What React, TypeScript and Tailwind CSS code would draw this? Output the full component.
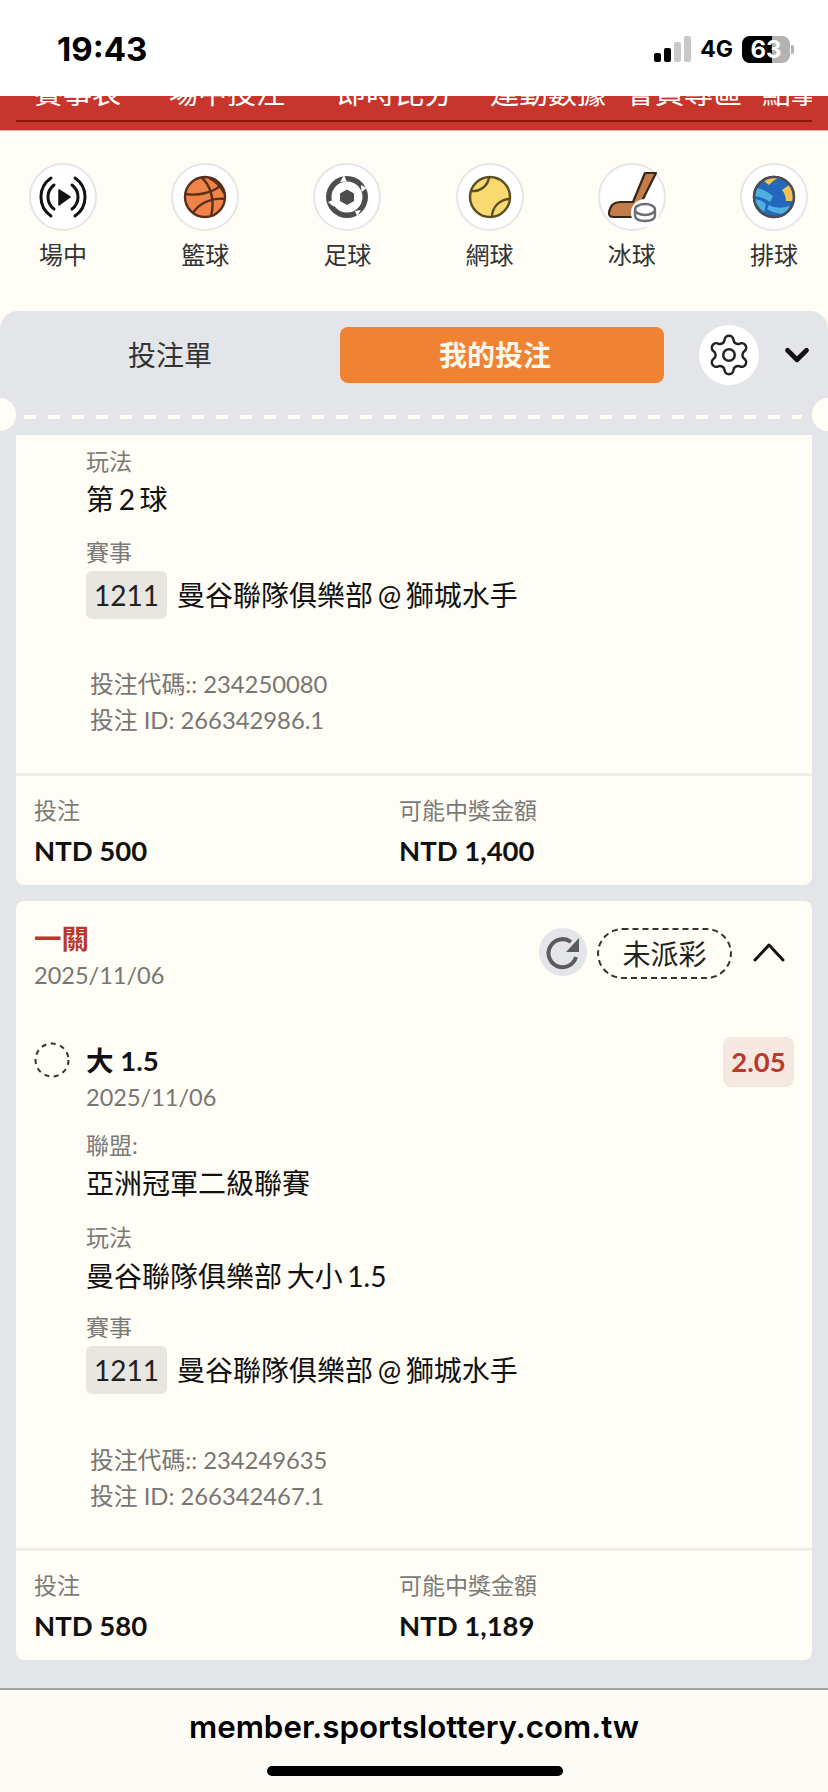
import { ChevronDown, Settings } from "lucide-react";

const FONT = "font-['Lato','Noto_Sans_CJK_TC',sans-serif]";

const navLinks = [
  { label: "賽事表", w: "w-[135px]" },
  { label: "場中投注", w: "w-[168px]" },
  { label: "即時比分", w: "w-[153px]" },
  { label: "運動數據", w: "w-[136px]" },
  { label: "會員專區", w: "w-[136px]" },
  { label: "點擊", w: "w-[68px]" },
];

function LiveIcon() {
  return (
    <svg viewBox="0 0 68 68" className="w-full h-full" fill="none" stroke="#111" strokeWidth="3" strokeLinecap="round">
      <path d="M22 15 A23 23 0 0 0 22 53" />
      <path d="M46 15 A23 23 0 0 1 46 53" />
      <path d="M25 22 A15 15 0 0 0 25 46" />
      <path d="M43 22 A15 15 0 0 1 43 46" />
      <path d="M30 27 L41 34 L30 42 Z" fill="#111" stroke="#111" strokeWidth="1.5" strokeLinejoin="round" />
    </svg>
  );
}

function BasketballIcon() {
  return (
    <svg viewBox="0 0 68 68" className="w-full h-full" fill="none" stroke="#57301c" strokeWidth="2.4">
      <circle cx="34" cy="34" r="20" fill="#f08347" />
      <path d="M30 14 C40 22 44 38 40 53" />
      <path d="M15 31 C26 33 42 30 50 22" />
      <path d="M54 36 C42 34 28 40 22 50" />
      <path d="M38 15 C44 18 50 24 53 30" />
    </svg>
  );
}

function SoccerIcon() {
  return (
    <svg viewBox="0 0 68 68" className="w-full h-full">
      <circle cx="34" cy="34" r="21" fill="#4d4d4d" />
      <circle cx="34" cy="34" r="15.5" fill="#fff" />
      <path d="M27 19 L31 12.5 L34 18.5 Z" fill="#fff" />
      <path d="M48 22 L54 25 L48.5 29 Z" fill="#fff" />
      <path d="M15 39 L20 37 L21 44 Z" fill="#fff" />
      <path d="M42 48 L48 47 L44 53 Z" fill="#fff" />
      <path d="M34 26.5 L41 30.5 L41 38 L34 42 L27 38 L27 30.5 Z" fill="#4d4d4d" />
    </svg>
  );
}

function TennisIcon() {
  return (
    <svg viewBox="0 0 68 68" className="w-full h-full" fill="none" stroke="#5b4f22" strokeWidth="2.4">
      <circle cx="34" cy="34" r="20" fill="#f8da70" />
      <path d="M15 28 C24 29 32 23 33 14" />
      <path d="M36 54 C36 44 44 36 54 36" />
    </svg>
  );
}

function HockeyIcon() {
  return (
    <svg viewBox="0 0 68 68" className="w-full h-full">
      <path d="M47 10 L58 10 L44 38 L36 54 L16 54 Q10 54 11 49 Q13 39 22 39 L35 39 Z" fill="#c47c4a" stroke="#33261a" strokeWidth="2.2" strokeLinejoin="round" />
      <circle cx="47" cy="50" r="14" fill="#fff" />
      <path d="M37 47 V53 Q38 58 47 58 Q56 58 57 53 V47" fill="#fff" stroke="#6a6d72" strokeWidth="2.4" />
      <ellipse cx="47" cy="46.5" rx="10" ry="5.5" fill="#fff" stroke="#6a6d72" strokeWidth="2.4" />
    </svg>
  );
}

function VolleyballIcon() {
  return (
    <svg viewBox="0 0 68 68" className="w-full h-full">
      <circle cx="34" cy="34" r="20" fill="#2468bd" stroke="#4a4f57" strokeWidth="2.4" />
      <path d="M24 18 Q30 14 38 15 Q32 18 29 22 Z" fill="#f5c24f" />
      <path d="M42 27 L49 22 Q54 30 52.5 38 L46 38 Q46 32 42 27 Z" fill="#f5c24f" />
      <path d="M17 25 Q26 27 33 33 L30 39 Q23 34 15 33 Z" fill="#4fb0e0" />
      <path d="M15 36 Q21 37 26 41 L24 49 Q17 44 15 36 Z" fill="#4fb0e0" />
      <path d="M29 42 Q38 47 50 43 Q47 49 42 51 Q33 50 27 46 Z" fill="#4fb0e0" />
      <circle cx="34" cy="34" r="20" fill="none" stroke="#4a4f57" strokeWidth="2.4" />
    </svg>
  );
}

const sports = [
  { label: "場中", Icon: LiveIcon },
  { label: "籃球", Icon: BasketballIcon },
  { label: "足球", Icon: SoccerIcon },
  { label: "網球", Icon: TennisIcon },
  { label: "冰球", Icon: HockeyIcon },
  { label: "排球", Icon: VolleyballIcon },
];

function StatusBar() {
  return (
    <div className="h-[96px] bg-white flex items-start justify-between pl-[57px] pr-[34px] pt-[29px]">
      <span className="font-['Inter',sans-serif] font-bold text-[33px] leading-[40px] text-black">19:43</span>
      <div className="flex items-center mt-[7px]">
        <div className="flex items-end gap-[3px] h-[27px] pb-[1px]">
          <div className="w-[7px] h-[9px] rounded-[2px] bg-black" />
          <div className="w-[7px] h-[14px] rounded-[2px] bg-black" />
          <div className="w-[7px] h-[20px] rounded-[2px] bg-[#c9c9c9]" />
          <div className="w-[7px] h-[26px] rounded-[2px] bg-[#c9c9c9]" />
        </div>
        <span className="ml-[9px] font-['Inter',sans-serif] font-bold text-[23px] leading-[27px] text-black">4G</span>
        <div className="ml-[9px] relative w-[48px] h-[27px] rounded-[8px] overflow-hidden bg-[#b3b3b3] flex items-center justify-center">
          <div className="absolute left-0 top-0 bottom-0 w-[30px] bg-black" />
          <span className="relative font-['Inter',sans-serif] font-bold text-[24px] leading-none text-white">63</span>
        </div>
        <div className="ml-[1px] w-[3px] h-[9px] rounded-r-[2px] bg-[#b3b3b3]" />
      </div>
    </div>
  );
}

function RedNav() {
  return (
    <div className="h-[35px] bg-[#c8352c] border-b border-[#eab7ae]">
      <div className="mx-[16px] h-[26px] border-b-2 border-[#8c1409] overflow-hidden flex items-end">
        {navLinks.map((link) => (
          <span key={link.label} className={`${link.w} shrink-0 pl-[18px] whitespace-nowrap text-[29px] leading-[29px] mb-[13px] text-white ${FONT}`}>
            {link.label}
          </span>
        ))}
      </div>
    </div>
  );
}

function SportsRow() {
  return (
    <div className="h-[180px] bg-[#fffdf6] flex justify-between pl-[29px] pr-[20px] pt-[32px]">
      {sports.map(({ label, Icon }) => (
        <div key={label} className="w-[68px] flex flex-col items-center">
          <div className="w-[68px] h-[68px] rounded-full bg-white border-2 border-[#e6e6e6] overflow-visible">
            <div className="-m-[2px] w-[68px] h-[68px]">
              <Icon />
            </div>
          </div>
          <span className={`mt-[4px] text-[24px] leading-[40px] whitespace-nowrap text-[#333] ${FONT}`}>{label}</span>
        </div>
      ))}
    </div>
  );
}

function PanelHeader() {
  return (
    <div className="relative h-[124px] shrink-0">
      <div className="flex items-center h-[73px] pt-[15px]">
        <div className={`w-[340px] text-center text-[28px] leading-[58px] text-[#333] ${FONT}`}>投注單</div>
        <div className={`w-[324px] h-[56px] rounded-[8px] bg-[#f08233] pr-[14px] flex items-center justify-center font-bold text-[28px] text-[#fff8ee] ${FONT}`}>
          我的投注
        </div>
        <div className="ml-[35px] w-[60px] h-[60px] rounded-full bg-white flex items-center justify-center shrink-0">
          <Settings size={46} strokeWidth={1.3} className="text-[#222]" />
        </div>
        <ChevronDown size={38} strokeWidth={3} className="ml-[19px] text-[#111] shrink-0" />
      </div>
      <div className="absolute left-[24px] right-[26px] top-[104px] h-[4px] bg-[repeating-linear-gradient(90deg,#fffdf6_0,#fffdf6_12px,transparent_12px,transparent_24px)]" />
      <div className="absolute -left-[16px] top-[87px] w-[32px] h-[33px] rounded-full bg-[#fffdf6]" />
      <div className="absolute -right-[16px] top-[87px] w-[32px] h-[33px] rounded-full bg-[#fffdf6]" />
    </div>
  );
}

function Label({ text, className = "" }: { text: string; className?: string }) {
  return <div className={`text-[23px] leading-[32px] text-[#7a7a78] ${className}`}>{text}</div>;
}

function Value({ text, className = "" }: { text: string; className?: string }) {
  return <div className={`text-[28px] leading-[38px] [word-spacing:-2.5px] text-[#111] ${className}`}>{text}</div>;
}

function MatchAndIds({ code, id, labelGap, idsGap }: { code: string; id: string; labelGap: string; idsGap: string }) {
  return (
    <>
      <Label text="賽事" className={labelGap} />
      <div className="mt-[3px] flex items-center">
        <span className="w-[81px] h-[48px] rounded-[6px] bg-[#e8e6e0] flex items-center justify-center text-[28px] text-[#222]">1211</span>
        <span className="ml-[10px] text-[28px] leading-[38px] [word-spacing:-2.5px] text-[#111]">曼谷聯隊俱樂部 @ 獅城水手</span>
      </div>
      <div className={`${idsGap} pl-[4px] text-[23.8px] leading-[36px] text-[#767674]`}>
        <div>投注代碼:: {code}</div>
        <div>投注 ID: {id}</div>
      </div>
    </>
  );
}

function Totals({ stake, payout, gap }: { stake: string; payout: string; gap: string }) {
  return (
    <div className={`${gap} border-t-[3px] border-[#f0eee7] flex px-[18px] pt-[18px] pb-[15px]`}>
      <div className="w-[365px]">
        <Label text="投注" />
        <div className="mt-[6px] text-[27.5px] leading-[38px] font-bold text-[#111]">{stake}</div>
      </div>
      <div>
        <Label text="可能中獎金額" />
        <div className="mt-[6px] text-[27.5px] leading-[38px] font-bold text-[#111]">{payout}</div>
      </div>
    </div>
  );
}

function RefreshButton() {
  return (
    <div className="w-[48px] h-[48px] rounded-full bg-[#e3e5e8] shrink-0">
      <svg viewBox="0 0 48 48" className="w-full h-full">
        <path d="M32 14 A14 14 0 1 0 37 29" fill="none" stroke="#5c5c5c" strokeWidth="4" />
        <path d="M40 10 L40 24 L27 24 Z" fill="#5c5c5c" />
      </svg>
    </div>
  );
}

function PendingDot() {
  return (
    <svg viewBox="0 0 36 36" className="w-[36px] h-[36px] mt-[5px] shrink-0">
      <circle cx="18" cy="18" r="16.5" fill="none" stroke="#333" strokeWidth="2" strokeDasharray="5 4.5" />
    </svg>
  );
}

function TopCard() {
  return (
    <div className="bg-[#fffdf6] rounded-b-[8px] pt-[10px]">
      <div className="pl-[70px]">
        <Label text="玩法" />
        <Value text="第 2 球" className="mt-[3px]" />
        <MatchAndIds code="234250080" id="266342986.1" labelGap="mt-[18px]" idsGap="mt-[47px]" />
      </div>
      <Totals stake="NTD 500" payout="NTD 1,400" gap="mt-[35px]" />
    </div>
  );
}

function SingleBetCard() {
  return (
    <div className="mt-[16px] bg-[#fffdf6] rounded-[8px]">
      <div className="flex justify-between pl-[18px] pr-[27px] pt-[21px]">
        <div>
          <div className="text-[27.5px] leading-[34px] font-bold text-[#b83a2c]">一關</div>
          <div className="mt-[1px] text-[23.5px] leading-[36px] text-[#767674]">2025/11/06</div>
        </div>
        <div className="flex items-start pt-[6px]">
          <RefreshButton />
          <div className="ml-[10px] w-[135px] h-[51px] rounded-full border-2 border-dashed border-[#333] flex items-center justify-center text-[28px] text-[#222]">
            未派彩
          </div>
          <svg viewBox="0 0 32 20" className="ml-[21px] mt-[14px] w-[32px] h-[20px]" fill="none" stroke="#111" strokeWidth="3" strokeLinecap="round" strokeLinejoin="round">
            <path d="M2 18 L16 3 L30 18" />
          </svg>
        </div>
      </div>
      <div className="mt-[44px] flex items-start pl-[18px] pr-[18px]">
        <PendingDot />
        <div className="flex-1 pl-[16px] pt-[5px]">
          <div className="text-[27.5px] leading-[38px] font-bold text-[#111]">大 1.5</div>
          <div className="mt-[1px] text-[23.5px] leading-[32px] text-[#767674]">2025/11/06</div>
        </div>
        <div className="w-[71px] h-[50px] rounded-[8px] bg-[#f5e8e0] flex items-center justify-center text-[27.5px] font-bold text-[#b83a2c]">2.05</div>
      </div>
      <div className="pl-[70px]">
        <Label text="聯盟:" className="mt-[16px]" />
        <Value text="亞洲冠軍二級聯賽" className="mt-[3px]" />
        <Label text="玩法" className="mt-[19px]" />
        <Value text="曼谷聯隊俱樂部 大小 1.5" className="mt-[4px]" />
        <MatchAndIds code="234249635" id="266342467.1" labelGap="mt-[16px]" idsGap="mt-[48px]" />
      </div>
      <Totals stake="NTD 580" payout="NTD 1,189" gap="mt-[34px]" />
    </div>
  );
}

export default function App() {
  return (
    <div className={`w-[828px] h-[1792px] flex flex-col overflow-hidden bg-[#fffdf6] ${FONT}`}>
      <StatusBar />
      <RedNav />
      <SportsRow />
      <div className="h-[1377px] bg-[#e3e5e8] rounded-t-[18px] overflow-hidden flex flex-col">
        <PanelHeader />
        <div className="px-[16px]">
          <TopCard />
          <SingleBetCard />
        </div>
      </div>
      <div className="flex-1 relative border-t-2 border-[#a3a3a3] bg-[#fcfbf6] flex justify-center">
        <span className="mt-[18px] font-['Inter',sans-serif] font-semibold text-[31.3px] leading-[38px] whitespace-nowrap text-black">member.sportslottery.com.tw</span>
        <div className="absolute left-[267px] top-[76px] w-[296px] h-[10px] rounded-full bg-black" />
      </div>
    </div>
  );
}
